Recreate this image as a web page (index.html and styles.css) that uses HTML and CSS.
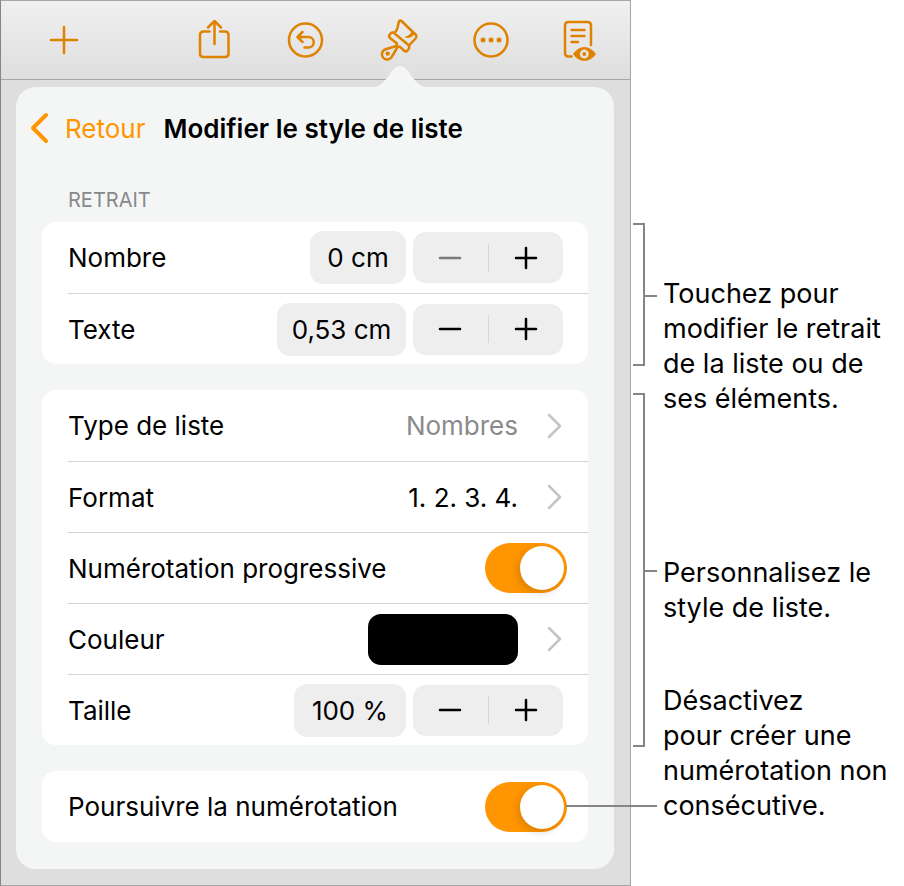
FILE: index.html
```html
<!DOCTYPE html>
<html lang="fr">
<head>
    <meta charset="UTF-8">
    <meta name="viewport" content="width=device-width, initial-scale=1.0">
    <title>Modifier le style de liste</title>
    <link rel="stylesheet" href="styles.css">
</head>
<body>
<div class="page">

    <!-- Écran de l'app -->
    <div class="screen">
        <nav class="toolbar">
            <button class="tool" aria-label="Ajouter">
                <svg width="44" height="44" viewBox="0 0 44 44"><path d="M22 9v26M9 22h26"/></svg>
            </button>
            <div class="tool-group">
                <button class="tool" aria-label="Partager">
                    <svg width="44" height="44" viewBox="0 0 44 44"><path d="M16.500 13.500h-6q-3.500 0-3.500 3.500v18.500q0 3.500 3.500 3.500h21.500q3.500 0 3.500-3.500V17q0-3.500-3.500-3.500h-5M21.500 26V3M15 9.500 21.500 3 28 9.500"/></svg>
                </button>
                <button class="tool" aria-label="Annuler">
                    <svg width="44" height="44" viewBox="0 0 44 44"><circle cx="20.500" cy="22" r="16.500"/><path d="M17.500 14l-5 5 5 5M13 19h10.500a5.200 5.200 0 0 1 0 10.500h-4"/></svg>
                </button>
                <button class="tool" aria-label="Format">
                    <svg width="44" height="44" viewBox="0 0 44 44"><path d="M17 15C21 13 20.500 8 22 3.500Q23 1.800 24.500 3L39 17Q40 18.500 39 20L32 27.500 17 15Q15.500 14 14 15L12.500 17Q11.500 18.500 13 20L20 25.500Q20 27.500 18 28.500L8.500 31.200A5.300 5.300 0 1 0 15 38.500L20 30Q21.500 28 23 28.800L27.500 33Q29 34 30.500 32.500L32 30.500Q32.500 29 32 27.500"/><path class="solid" d="M35.500 12.500Q33 17.500 27.500 19 31 21.500 36 18L37.500 15Z"/><circle class="solid" cx="10.700" cy="35.600" r="2.200"/></svg>
                </button>
                <button class="tool" aria-label="Plus">
                    <svg width="44" height="44" viewBox="0 0 44 44"><circle cx="22" cy="22" r="16.500"/><g class="solid"><circle cx="14" cy="22" r="2.500"/><circle cx="22" cy="22" r="2.500"/><circle cx="30" cy="22" r="2.500"/></g></svg>
                </button>
                <button class="tool" aria-label="Présentation">
                    <svg width="44" height="44" viewBox="0 0 44 44"><path d="M10.500 38.500H7.500q-3.500 0-3.500-3.500V7.500q0-3.500 3.500-3.500h19q3.500 0 3.500 3.500V27M10.500 12h13M10.500 18h13M10.500 24h6.500"/><path class="solid" fill-rule="evenodd" d="M12 36Q17 29 23.300 29T35 36Q30 43 23.300 43T12 36ZM23.300 31.600a4.400 4.400 0 1 0 .01 0Z"/><circle class="solid" cx="23.300" cy="36" r="1.900"/></svg>
                </button>
            </div>
        </nav>

        <main class="popover">
            <svg class="arrow" width="64" height="22" viewBox="0 0 64 22"><path d="M0 22C14 22 17 14 24 5Q32-5 40 5C47 14 50 22 64 22Z"/></svg>
            <header class="popover-header">
                <a class="back" href="#"><svg width="20" height="32" viewBox="0 0 20 32"><path d="M17 3 4 16l13 13"/></svg>Retour</a>
                <h1>Modifier le style de liste</h1>
            </header>

            <h2 class="caption">RETRAIT</h2>
            <section class="group">
                <div class="row">
                    <label for="nombre">Nombre</label>
                    <input class="value value-s" id="nombre" type="text" value="0 cm">
                    <div class="stepper">
                        <button aria-label="Diminuer" disabled><svg width="24" height="24" viewBox="0 0 24 24"><path d="M2 12h20"/></svg></button>
                        <button aria-label="Augmenter"><svg width="24" height="24" viewBox="0 0 24 24"><path d="M2 12h20M12 2v20"/></svg></button>
                    </div>
                </div>
                <div class="row">
                    <label for="texte">Texte</label>
                    <input class="value value-l" id="texte" type="text" value="0,53 cm">
                    <div class="stepper">
                        <button aria-label="Diminuer"><svg width="24" height="24" viewBox="0 0 24 24"><path d="M2 12h20"/></svg></button>
                        <button aria-label="Augmenter"><svg width="24" height="24" viewBox="0 0 24 24"><path d="M2 12h20M12 2v20"/></svg></button>
                    </div>
                </div>
            </section>

            <section class="group">
                <a class="row" href="#">
                    <span>Type de liste</span>
                    <span class="muted">Nombres</span>
                    <svg class="chevron" width="16" height="26" viewBox="0 0 16 26"><path d="M2 2l11 11L2 24"/></svg>
                </a>
                <a class="row" href="#">
                    <span>Format</span>
                    <span>1. 2. 3. 4.</span>
                    <svg class="chevron" width="16" height="26" viewBox="0 0 16 26"><path d="M2 2l11 11L2 24"/></svg>
                </a>
                <div class="row">
                    <label for="progressive">Numérotation progressive</label>
                    <input class="switch" id="progressive" type="checkbox" checked>
                </div>
                <a class="row" href="#">
                    <span>Couleur</span>
                    <span class="swatch"></span>
                    <svg class="chevron" width="16" height="26" viewBox="0 0 16 26"><path d="M2 2l11 11L2 24"/></svg>
                </a>
                <div class="row">
                    <label for="taille">Taille</label>
                    <input class="value value-m" id="taille" type="text" value="100 %">
                    <div class="stepper">
                        <button aria-label="Diminuer"><svg width="24" height="24" viewBox="0 0 24 24"><path d="M2 12h20"/></svg></button>
                        <button aria-label="Augmenter"><svg width="24" height="24" viewBox="0 0 24 24"><path d="M2 12h20M12 2v20"/></svg></button>
                    </div>
                </div>
            </section>

            <section class="group">
                <div class="row">
                    <label for="poursuivre">Poursuivre la numérotation</label>
                    <input class="switch" id="poursuivre" type="checkbox" checked>
                </div>
            </section>
        </main>
    </div>

    <!-- Légendes -->
    <div class="brackets">
        <div class="bracket bracket-indent"></div>
        <div class="bracket bracket-style"></div>
        <div class="leader"></div>
    </div>
    <div class="notes">
        <p class="note-indent">Touchez pour<br>modifier le retrait<br>de la liste ou de<br>ses éléments.</p>
        <p class="note-style">Personnalisez le<br>style de liste.</p>
        <p>Désactivez<br>pour créer une<br>numérotation non<br>consécutive.</p>
    </div>
</div>
</body>
</html>
```
FILE: styles.css
```css
* {
    box-sizing: border-box;
}

body {
    margin: 0;
    background: #fff;
    color: #000;
    font-family: Inter, "Liberation Sans", sans-serif;
    font-size: 26px;
}

h1, h2, p {
    margin: 0;
}

button, input {
    font: inherit;
    color: inherit;
    border: 0;
    margin: 0;
    padding: 0;
    background: none;
}

a {
    color: inherit;
    text-decoration: none;
}

svg {
    display: block;
    fill: none;
    stroke: currentColor;
    stroke-width: 2.5;
    stroke-linecap: round;
    stroke-linejoin: round;
}

.page {
    display: grid;
    grid-template-columns: 1fr 32px 241px;
    min-height: 100vh;
}

/* Écran */
.screen {
    border: 1px solid #a6a6a6;
    border-left-color: #858585;
    background: #dedede;
    padding-bottom: 16px;
}

.toolbar {
    display: flex;
    justify-content: space-between;
    align-items: center;
    height: 79px;
    padding: 0 25px 0 41px;
    border-bottom: 1px solid #a6a6a6;
    background: linear-gradient(#f0f0f0, #dedede);
    color: #df8200;
}

.tool-group {
    display: flex;
    gap: 48px;
}

.solid {
    fill: currentColor;
    stroke: none;
}

/* Popover */
.popover {
    position: relative;
    margin: 7px 16px 0 15px;
    padding: 0 26px 27px;
    border-radius: 20px;
    background: #f4f6f6;
}

.arrow {
    position: absolute;
    top: -21px;
    left: 352px;
    fill: #f4f6f6;
    stroke: none;
}

.popover-header {
    display: flex;
    align-items: center;
    gap: 18px;
    height: 82px;
    margin-left: -13px;
}

.back {
    display: flex;
    align-items: center;
    gap: 16px;
    color: #ff9500;
}

.back svg {
    stroke-width: 4;
}

h1 {
    font-size: 26px;
    font-weight: 600;
}

.caption {
    height: 53px;
    padding: 19px 26px 0;
    color: #88888c;
    font-size: 20px;
    font-weight: 400;
    line-height: 24px;
}

.group {
    border-radius: 14px;
    background: #fff;
}

.group + .group {
    margin-top: 26px;
}

.row {
    display: flex;
    align-items: center;
    gap: 7px;
    height: 71px;
    margin-left: 26px;
    padding-right: 25px;
}

.row + .row {
    border-top: 1px solid #d4d4d6;
}

.row > :first-child {
    flex: 1;
}

.value {
    height: 53px;
    border-radius: 13px;
    background: #eee;
    text-align: center;
}

.value-s {
    width: 96px;
}

.value-m {
    width: 112px;
}

.value-l {
    width: 129px;
}

.stepper {
    display: flex;
    align-items: center;
    width: 150px;
    height: 51px;
    border-radius: 13px;
    background: #eee;
}

.stepper button {
    display: flex;
    flex: 1;
    justify-content: center;
    align-items: center;
    height: 28px;
}

.stepper button + button {
    border-left: 1px solid #d6d6d6;
}

.stepper button:disabled {
    color: #7a7a7a;
}

.muted {
    color: #8a8a8e;
}

.chevron {
    margin-left: 22px;
    color: #c4c4c6;
}

.swatch {
    width: 150px;
    height: 51px;
    border-radius: 13px;
    background: #000;
}

.switch {
    appearance: none;
    display: flex;
    align-items: center;
    width: 82px;
    height: 50px;
    margin-right: -4px;
    padding: 3px;
    border-radius: 25px;
    background: #c4c4c6;
}

.switch:checked {
    justify-content: flex-end;
    background: #ff9500;
}

.switch::before {
    content: "";
    width: 44px;
    height: 44px;
    border-radius: 50%;
    background: #fff;
    box-shadow: -2px 3px 8px rgba(0, 0, 0, 0.15);
}

/* Légendes */
.brackets {
    padding: 223px 6px 0 2px;
}

.bracket {
    position: relative;
    width: 12px;
    border: 2px solid #858585;
    border-left: 0;
}

.bracket::after {
    content: "";
    position: absolute;
    top: 50%;
    left: 100%;
    width: 14px;
    height: 2px;
    background: #858585;
}

.bracket-indent {
    height: 143px;
    margin-bottom: 27px;
}

.bracket-style {
    height: 354px;
    margin-bottom: 58px;
}

/* Le trait rejoint l'interrupteur par-dessus l'écran */
.leader {
    position: relative;
    height: 2px;
    margin-left: -67px;
    background: #858585;
}

.notes {
    padding-top: 276px;
    font-size: 27px;
    line-height: 35px;
}

.note-indent {
    margin-bottom: 139px;
}

.note-style {
    margin-bottom: 58px;
}
```
